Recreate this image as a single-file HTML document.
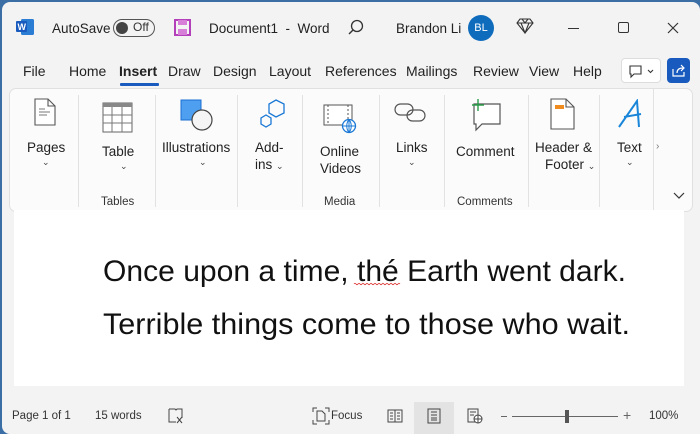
<!DOCTYPE html>
<html><head><meta charset="utf-8"><style>
*{margin:0;padding:0;box-sizing:border-box}
body{width:700px;height:434px;overflow:hidden;background:#3a6ea5;font-family:"Liberation Sans",sans-serif;color:#222;position:relative}
.win{position:absolute;left:2px;top:2px;width:698px;height:432px;background:#f3f3f3;border-radius:8px 8px 0 8px;overflow:hidden}
.a{position:absolute;white-space:nowrap}
.t{font-size:13.5px;color:#222}
.ribbon{position:absolute;left:7px;top:86px;width:684px;height:124px;background:#fbfbfb;border:1px solid #e0e0e0;border-radius:7px}
.sep{position:absolute;top:6px;width:1px;height:112px;background:#e2e2e2}
.lbl{font-size:13.5px;color:#222;text-align:center}
.grp{font-size:11.5px;color:#333}
.chev{font-size:9px;color:#444}
.sb{font-size:11.5px;color:#333}
</style></head><body>
<div class="win">
<!-- title bar -->
<svg class="a" style="left:14px;top:16px" width="20" height="18"><rect x="5" y="1" width="13" height="16" rx="1.5" fill="#2b7cd3"/><rect x="0" y="3" width="11" height="11" rx="1" fill="#185abd"/><text x="1.5" y="12" font-size="9" font-weight="bold" fill="#fff" font-family="Liberation Sans">W</text></svg>
<div class="a t" style="left:50px;top:19px">AutoSave</div>
<div class="a" style="left:111px;top:17px;width:42px;height:18px;border:1.3px solid #555;border-radius:9px"><div style="position:absolute;left:2px;top:2px;width:12px;height:12px;border-radius:50%;background:#444"></div><span style="position:absolute;left:19px;top:0px;font-size:12px;color:#333">Off</span></div>
<svg class="a" style="left:172px;top:17px" width="17" height="17"><rect x="1" y="1" width="15" height="15" fill="none" stroke="#b43fbb" stroke-width="2"/><rect x="4" y="1" width="9" height="5" fill="#d67ed8"/><rect x="4" y="10" width="9" height="6" fill="#d67ed8"/></svg>
<div class="a t" style="left:207px;top:19px">Document1&nbsp; -&nbsp; Word</div>
<svg class="a" style="left:345px;top:16px" width="18" height="18"><circle cx="10" cy="8" r="5.5" fill="none" stroke="#333" stroke-width="1.3"/><line x1="6" y1="12" x2="2" y2="16" stroke="#333" stroke-width="1.4"/></svg>
<div class="a t" style="left:394px;top:19px">Brandon Li</div>
<div class="a" style="left:466px;top:13px;width:26px;height:26px;border-radius:50%;background:#0f6cbd;color:#fff;font-size:11px;text-align:center;line-height:26px">BL</div>
<svg class="a" style="left:514px;top:16px" width="18" height="16"><path d="M4 1H14L17 5L9 15L1 5Z M1 5H17 M6 1L9 5L12 1 M5 5L9 15L13 5" fill="none" stroke="#333" stroke-width="1.1"/></svg>
<div class="a" style="left:566px;top:26px;width:11px;height:1.3px;background:#333"></div>
<div class="a" style="left:616px;top:20px;width:11px;height:11px;border:1.2px solid #333;border-radius:2px"></div>
<svg class="a" style="left:665px;top:20px" width="12" height="12"><path d="M1 1L11 11M11 1L1 11" stroke="#333" stroke-width="1.2"/></svg>
<!-- menu -->
<div class="a t" style="left:21px;top:61px;font-size:14px">File</div>
<div class="a t" style="left:67px;top:61px;font-size:14px">Home</div>
<div class="a t" style="left:117px;top:61px;font-size:14px;font-weight:bold">Insert</div>
<div class="a" style="left:118px;top:81px;width:39px;height:2.5px;background:#185abd;border-radius:1px"></div>
<div class="a t" style="left:166px;top:61px;font-size:14px">Draw</div>
<div class="a t" style="left:211px;top:61px;font-size:14px">Design</div>
<div class="a t" style="left:267px;top:61px;font-size:14px">Layout</div>
<div class="a t" style="left:323px;top:61px;font-size:14px">References</div>
<div class="a t" style="left:404px;top:61px;font-size:14px">Mailings</div>
<div class="a t" style="left:471px;top:61px;font-size:14px">Review</div>
<div class="a t" style="left:527px;top:61px;font-size:14px">View</div>
<div class="a t" style="left:571px;top:61px;font-size:14px">Help</div>
<div class="a" style="left:619px;top:56px;width:40px;height:25px;background:#fff;border:1px solid #ddd;border-radius:4px"><svg style="position:absolute;left:7px;top:6px" width="26" height="14"><path d="M1 1H12V9H5L2 12V9H1Z" fill="none" stroke="#333" stroke-width="1.1"/><path d="M19 5L21.5 7.5L24 5" fill="none" stroke="#333" stroke-width="1.1"/></svg></div>
<div class="a" style="left:665px;top:56px;width:23px;height:25px;background:#185abd;border-radius:4px"><svg style="position:absolute;left:4px;top:5px" width="15" height="15"><path d="M2 6V13H13V9 M6 10C6 6 9 5 12 5 M10 2L13 5L10 8" fill="none" stroke="#fff" stroke-width="1.2"/></svg></div>
<!-- ribbon -->
<div class="ribbon">
<div class="sep" style="left:68px"></div><div class="sep" style="left:145px"></div><div class="sep" style="left:227px"></div><div class="sep" style="left:292px"></div><div class="sep" style="left:369px"></div><div class="sep" style="left:434px"></div><div class="sep" style="left:518px"></div><div class="sep" style="left:589px"></div><div class="sep" style="left:643px;top:0;height:122px"></div>
<!-- Pages -->
<svg class="a" style="left:23px;top:9px" width="24" height="28"><path d="M2 1H15L22 8V27H2Z M15 1V8H22" fill="#fff" stroke="#555" stroke-width="1.1"/><path d="M6 11H12M6 14H17M6 17H14" stroke="#777"/></svg>
<div class="a lbl" style="left:17px;top:51px">Pages</div><div class="a chev" style="left:32px;top:68px">⌄</div>
<!-- Table -->
<svg class="a" style="left:92px;top:13px" width="32" height="32"><rect x="1" y="1" width="29" height="29" fill="#fff" stroke="#666"/><rect x="1" y="1" width="29" height="4" fill="#888"/><path d="M1 13H30M1 21H30M10 5V30M20 5V30" stroke="#777"/></svg>
<div class="a lbl" style="left:92px;top:55px">Table</div><div class="a chev" style="left:110px;top:72px">⌄</div>
<div class="a grp" style="left:91px;top:107px">Tables</div>
<!-- Illustrations -->
<svg class="a" style="left:170px;top:9px" width="34" height="34"><rect x="1" y="2" width="20" height="20" fill="#4f9ff0" stroke="#1a6fd1"/><circle cx="22" cy="22" r="10" fill="#f5f5f5" stroke="#444" stroke-width="1.2"/></svg>
<div class="a lbl" style="left:152px;top:51px">Illustrations</div><div class="a chev" style="left:189px;top:68px">⌄</div>
<!-- Addins -->
<svg class="a" style="left:250px;top:10px" width="32" height="30"><path d="M16 1L24 5V14L16 18L9 14V5Z" fill="none" stroke="#1a78d6" stroke-width="1.3"/><path d="M6 16L11 19V25L6 28L1 25V19Z" fill="none" stroke="#1a78d6" stroke-width="1.3"/></svg>
<div class="a lbl" style="left:245px;top:51px">Add-</div><div class="a lbl" style="left:245px;top:68px">ins <span class="chev">⌄</span></div>
<!-- Online videos -->
<svg class="a" style="left:313px;top:13px" width="34" height="32"><rect x="1" y="3" width="28" height="20" fill="#fff" stroke="#555"/><path d="M5 3V23M25 3V23" stroke="#555" stroke-dasharray="2 2"/><circle cx="26" cy="24" r="6.5" fill="#fff" stroke="#1a78d6" stroke-width="1.3"/><path d="M19.5 24H32.5M26 17.5V30.5M26 17.5C23 21 23 27 26 30.5C29 27 29 21 26 17.5" fill="none" stroke="#1a78d6"/></svg>
<div class="a lbl" style="left:310px;top:55px">Online</div><div class="a lbl" style="left:310px;top:72px">Videos</div>
<div class="a grp" style="left:314px;top:107px">Media</div>
<!-- Links -->
<svg class="a" style="left:384px;top:13px" width="34" height="22"><rect x="1" y="2" width="18" height="11" rx="5.5" fill="none" stroke="#555" stroke-width="1.2"/><rect x="13" y="8" width="18" height="11" rx="5.5" fill="none" stroke="#555" stroke-width="1.2"/></svg>
<div class="a lbl" style="left:386px;top:51px">Links</div><div class="a chev" style="left:398px;top:68px">⌄</div>
<!-- Comment -->
<svg class="a" style="left:458px;top:9px" width="36" height="34"><path d="M6 6H32V26H14L8 32V26H6Z" fill="#fff" stroke="#555" stroke-width="1.2"/><path d="M10 1V13M4 7H16" stroke="#2a9d4a" stroke-width="1.4"/></svg>
<div class="a lbl" style="left:446px;top:55px">Comment</div>
<div class="a grp" style="left:447px;top:107px">Comments</div>
<!-- Header footer -->
<svg class="a" style="left:540px;top:9px" width="26" height="32"><path d="M1 1H16L24 9V31H1Z M16 1V9H24" fill="#fff" stroke="#555" stroke-width="1.1"/><rect x="5" y="7" width="9" height="4" fill="#f08c1f"/></svg>
<div class="a lbl" style="left:525px;top:51px">Header &amp;</div><div class="a lbl" style="left:535px;top:68px">Footer <span class="chev">⌄</span></div>
<!-- Text -->
<svg class="a" style="left:607px;top:10px" width="26" height="30"><path d="M2 28L20 2L22 28 M7 18L24 15" fill="none" stroke="#1a86d9" stroke-width="2"/></svg>
<div class="a lbl" style="left:607px;top:51px">Text</div><div class="a chev" style="left:616px;top:68px">⌄</div>
<div class="a" style="left:646px;top:52px;font-size:10px;color:#777">›</div>
<svg class="a" style="left:663px;top:103px" width="12" height="8"><path d="M1 1L6 6L11 1" fill="none" stroke="#333" stroke-width="1.2"/></svg>
</div>
<!-- document -->
<div class="a" style="left:12px;top:208px;width:670px;height:176px;background:#fff"></div>
<svg class="a" style="left:0;top:0" width="698" height="432">
<text x="101" y="279" font-family="Liberation Sans" font-size="30" fill="#111" textLength="523" lengthAdjust="spacingAndGlyphs">Once upon a time, thé Earth went dark.</text>
<text x="101" y="332" font-family="Liberation Sans" font-size="30" fill="#111" textLength="527" lengthAdjust="spacingAndGlyphs">Terrible things come to those who wait.</text>
<path d="M352 282q1 -1.5 2 0t2 0t2 0t2 0t2 0t2 0t2 0t2 0t2 0t2 0t2 0t2 0t2 0t2 0t2 0t2 0t2 0t2 0t2 0t2 0t2 0t2 0t2 0" fill="none" stroke="#d33" stroke-width="0.8"/>
</svg>
<!-- status bar -->
<div class="a sb" style="left:10px;top:408px">Page 1 of 1</div>
<div class="a sb" style="left:93px;top:408px">15 words</div>
<svg class="a" style="left:166px;top:406px" width="16" height="16"><path d="M1 1H7L8 2L9 1H14V10 M1 1V14H8" fill="none" stroke="#444"/><path d="M9 9L14 15M14 9L9 15" stroke="#444"/></svg>
<svg class="a" style="left:310px;top:405px" width="18" height="18"><path d="M1 5V1H5M13 1H17V5M17 13V17H13M5 17H1V13" fill="none" stroke="#444"/><path d="M5 4H10L13 7V14H5Z" fill="none" stroke="#444"/></svg>
<div class="a sb" style="left:329px;top:408px">Focus</div>
<svg class="a" style="left:385px;top:407px" width="16" height="14"><path d="M1 1H15V13H1Z M8 1V13 M3 4H6M3 7H6M3 10H6M10 4H13M10 7H13M10 10H13" fill="none" stroke="#444"/></svg>
<div class="a" style="left:412px;top:400px;width:40px;height:32px;background:#e3e3e3"></div>
<svg class="a" style="left:425px;top:406px" width="14" height="16"><path d="M1 1H13V15H1Z M4 4H10M4 7H10M4 10H10M4 12H10" fill="none" stroke="#444"/></svg>
<svg class="a" style="left:465px;top:406px" width="16" height="16"><path d="M1 1H11V14H1Z M3 4H9M3 7H7" fill="none" stroke="#444"/><circle cx="11" cy="11" r="4" fill="#fff" stroke="#444"/><path d="M7 11H15M11 7V15" stroke="#444"/></svg>
<div class="a" style="left:499px;top:414px;width:6px;height:1px;background:#666"></div>
<div class="a" style="left:510px;top:414px;width:106px;height:1px;background:#666"></div>
<div class="a" style="left:563px;top:408px;width:4px;height:13px;background:#555"></div>
<div class="a sb" style="left:621px;top:405px;font-size:14px;color:#666">+</div>
<div class="a sb" style="left:647px;top:408px">100%</div>
</div>
</body></html>
